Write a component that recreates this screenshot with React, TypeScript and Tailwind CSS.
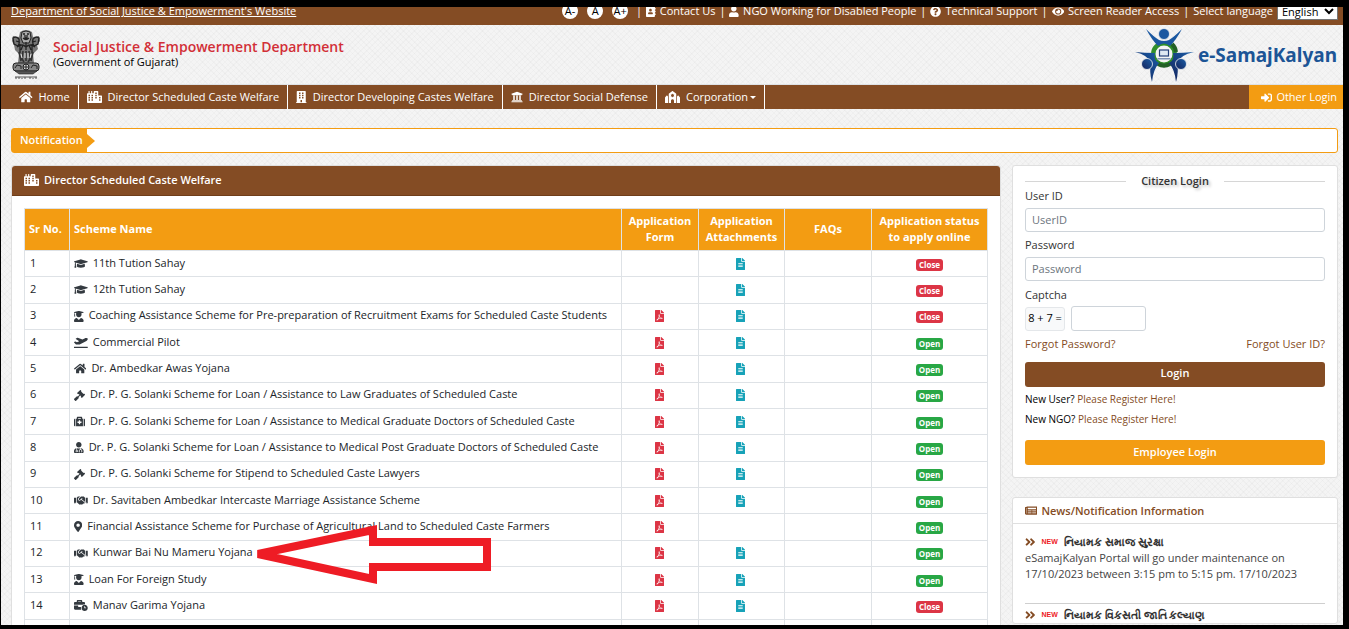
import React from "react";
import {
  FaAddressBook, FaUser, FaQuestionCircle, FaEye, FaHome, FaCity, FaBuilding, FaUniversity, FaSynagogue,
  FaSignInAlt, FaGraduationCap, FaUserGraduate, FaPlaneDeparture, FaGavel, FaMedkit, FaUserMd, FaHandshake,
  FaMapMarkerAlt, FaBusinessTime, FaFilePdf, FaFileAlt, FaNewspaper, FaAngleDoubleRight, FaBook,
} from "react-icons/fa";
import type { IconType } from "react-icons";

type Scheme = { name: string; icon: IconType; form: boolean; attachment: boolean; open: boolean };

const schemes: Scheme[] = [
  { name: "11th Tution Sahay", icon: FaGraduationCap, form: false, attachment: true, open: false },
  { name: "12th Tution Sahay", icon: FaGraduationCap, form: false, attachment: true, open: false },
  { name: "Coaching Assistance Scheme for Pre-preparation of Recruitment Exams for Scheduled Caste Students", icon: FaUserGraduate, form: true, attachment: true, open: false },
  { name: "Commercial Pilot", icon: FaPlaneDeparture, form: true, attachment: true, open: true },
  { name: "Dr. Ambedkar Awas Yojana", icon: FaHome, form: true, attachment: true, open: true },
  { name: "Dr. P. G. Solanki Scheme for Loan / Assistance to Law Graduates of Scheduled Caste", icon: FaGavel, form: true, attachment: true, open: true },
  { name: "Dr. P. G. Solanki Scheme for Loan / Assistance to Medical Graduate Doctors of Scheduled Caste", icon: FaMedkit, form: true, attachment: true, open: true },
  { name: "Dr. P. G. Solanki Scheme for Loan / Assistance to Medical Post Graduate Doctors of Scheduled Caste", icon: FaUserMd, form: true, attachment: true, open: true },
  { name: "Dr. P. G. Solanki Scheme for Stipend to Scheduled Caste Lawyers", icon: FaGavel, form: true, attachment: true, open: true },
  { name: "Dr. Savitaben Ambedkar Intercaste Marriage Assistance Scheme", icon: FaHandshake, form: true, attachment: true, open: true },
  { name: "Financial Assistance Scheme for Purchase of Agricultural Land to Scheduled Caste Farmers", icon: FaMapMarkerAlt, form: true, attachment: false, open: true },
  { name: "Kunwar Bai Nu Mameru Yojana", icon: FaHandshake, form: true, attachment: true, open: true },
  { name: "Loan For Foreign Study", icon: FaUserGraduate, form: true, attachment: true, open: true },
  { name: "Manav Garima Yojana", icon: FaBusinessTime, form: true, attachment: true, open: false },
  { name: "", icon: FaBook, form: false, attachment: false, open: false },
];

const navItems: { label: string; icon: IconType; caret?: boolean }[] = [
  { label: "Home", icon: FaHome },
  { label: "Director Scheduled Caste Welfare", icon: FaCity },
  { label: "Director Developing Castes Welfare", icon: FaBuilding },
  { label: "Director Social Defense", icon: FaUniversity },
  { label: "Corporation", icon: FaSynagogue, caret: true },
];

const topLinks: { label: string; icon: IconType }[] = [
  { label: "Contact Us", icon: FaAddressBook },
  { label: "NGO Working for Disabled People", icon: FaUser },
  { label: "Technical Support", icon: FaQuestionCircle },
  { label: "Screen Reader Access", icon: FaEye },
];

function Emblem() {
  return (
    <svg viewBox="0 0 30 50" className="h-[50px] w-[30px] shrink-0" aria-label="National emblem">
      <path d="M9 2Q15-2 21 2L22 7L28 6L29 11L26 15L27 19L24 22L22 24L23 33H7L8 24L4 20L3 15L1 11L2 6L8 7Z" fill="#777" />
      <path d="M11 2Q15 0 19 2L20 8L18 13H12L10 8Z" fill="#aaa" stroke="#222" strokeWidth="1" />
      <path d="M12 4h2m2 0h2M12 8q3 3 6 0M14 5v3h2V5M2 8q3-2 6 1q1 4-1 7l-4-2zM28 8q-3-2-6 1q-1 4 1 7l4-2zM5 11l3 1m17-1l-3 1M6 17q5-4 9 0q4-4 9 0M9 14v9m12-9v9M15 12v8M12 15l-2 5m8-5l2 5" fill="none" stroke="#222" strokeWidth="1.3" />
      <path d="M8 22l2 9M12 21l-1 8 2 3M15 21v10M18 21l1 8-2 3M22 22l-2 9" fill="none" stroke="#333" strokeWidth="1.6" />
      <path d="M10 24l1 4m3-5v5m3-5v5m3-4l-1 4" stroke="#eee" strokeWidth="1" />
      <rect x="2" y="33" width="26" height="8" rx="3" fill="#888" stroke="#222" />
      <circle cx="15" cy="37" r="3" fill="#ddd" stroke="#222" />
      <path d="M12 37h6M15 34v6M4 38l2-3 4 1v3M20 38l2-3 4 1v3" fill="none" stroke="#222" />
      <path d="M4 41h22l-4 3H8z" fill="#555" stroke="#222" strokeWidth=".6" />
      <path d="M4 47h22" stroke="#555" />
      <path d="M5 49v-2m3 2v-2m3 2v-1m3 1v-2m5 2v-2m3 2v-1m3 1v-2" stroke="#555" />
    </svg>
  );
}

function SamajLogo() {
  return (
    <svg viewBox="0 0 60 54" className="h-[54px] w-[60px] shrink-0" aria-hidden="true">
      <defs>
        <linearGradient id="figure" x1="0" y1="1" x2="1" y2="0">
          <stop offset="0" stopColor="#14225a" />
          <stop offset="1" stopColor="#1a5ea8" />
        </linearGradient>
      </defs>
      <circle cx="30" cy="26" r="10.5" fill="none" stroke="#2f8f2a" strokeWidth="5" />
      <path d="M38 16A13 13 0 0 1 42 24M24 36A12 12 0 0 0 36 36" fill="none" stroke="#236026" strokeWidth="4" />
      <g fill="#1a57a0">
        <path d="M12 1Q20 9 25 12Q30 14 35 12Q40 9 48 1Q42 12 36 18Q30 13 24 18Q18 12 12 1Z" />
        <circle cx="30" cy="6" r="5.5" stroke="#f2f2f2" strokeWidth=".8" />
      </g>
      <g fill="url(#figure)">
        <path d="M1 24Q11 25 21 25Q19 32 25 35Q19 42 18 54Q15 44 17 35Q14 27 1 24Z" />
        <circle cx="13" cy="36" r="5.5" stroke="#f2f2f2" strokeWidth=".8" />
        <path d="M60 24Q49 25 39 25Q41 32 35 35Q41 42 42 54Q45 44 43 35Q46 27 60 24Z" />
        <circle cx="47" cy="36" r="5.500" stroke="#f2f2f2" strokeWidth=".8" />
      </g>
      <circle cx="30" cy="26" r="8.5" fill="#f4f4f4" />
      <rect x="25.500" y="22" width="9" height="6" fill="#dfe8f2" stroke="#243f78" strokeWidth="1.200" />
      <path d="M24 30h12l1.500 1.500h-15z" fill="#7e93b5" />
    </svg>
  );
}

function NewBadge() {
  return <span className="font-['Liberation_Sans',sans-serif] text-[7px] font-bold text-[#ee1c25]">NEW</span>;
}

function Field({ id, label, placeholder, type }: { id: string; label: string; placeholder: string; type: string }) {
  return (
    <div className="mb-1.5">
      <label htmlFor={id} className="mb-[5px] block leading-[14px] font-medium text-[#333]">{label}</label>
      <input id={id} type={type} placeholder={placeholder} className="block h-6 w-full rounded-[3px] border border-[#ced4da] bg-white px-1.5 pb-0.5 placeholder:text-[#6c757d]" />
    </div>
  );
}

export default function App() {
  return (
    <div className="relative h-screen overflow-hidden border-t-[7px] border-r-[6px] border-b-4 border-l border-black bg-[#f4f4f4] bg-[repeating-linear-gradient(45deg,#00000005_0_1px,transparent_1px_4px),repeating-linear-gradient(-45deg,#00000005_0_1px,transparent_1px_4px)] font-['Open_Sans','Noto_Sans',sans-serif] text-[11px] leading-4 text-[#212529]">
      <div className="-mt-2.5 flex h-7 items-center justify-between bg-[#844c24] pr-[5px] pl-2.5 text-white">
        <a href="#department" className="underline">Department of Social Justice &amp; Empowerment's Website</a>
        <div className="flex items-center gap-1">
          <div className="mr-1 flex gap-[9px] text-black">
            {["A-", "A", "A+"].map((t) => (
              <button key={t} className="h-4 w-4 rounded-full bg-white leading-4">{t}</button>
            ))}
          </div>
          {topLinks.map(({ label, icon: Icon }) => (
            <React.Fragment key={label}>
              <span>|</span>
              <a href="#top" className="flex items-center gap-1"><Icon size="auto" className="h-[11px] w-auto" />{label}</a>
            </React.Fragment>
          ))}
          <span>|</span>
          <label htmlFor="language">Select language</label>
          <select id="language" className="h-[18px] w-[61px] border border-[#767676] bg-white text-[11px] leading-4 text-black">
            <option>English</option>
          </select>
        </div>
      </div>

      <header className="flex h-[60px] items-center justify-between border-b border-[#dee2e6] pr-1.5 pl-2.5">
        <div className="flex items-center gap-3">
          <Emblem />
          <div className="pb-0.5">
            <h1 className="text-sm leading-4 font-semibold text-[#d22f37]">Social Justice &amp; Empowerment Department</h1>
            <p className="leading-[14px] text-black">(Government of Gujarat)</p>
          </div>
        </div>
        <a href="#home" className="flex items-center gap-1">
          <SamajLogo />
          <span className="font-['Noto_Sans'] text-[19px] font-bold text-[#1c5596]">e-SamajKalyan</span>
        </a>
      </header>

      <nav className="flex h-6 items-stretch bg-[#844c24] pl-2.5 font-medium text-white">
        {navItems.map(({ label, icon: Icon, caret }) => (
          <a key={label} href="#nav" className="flex items-center gap-1.5 border-r border-white px-2">
            <Icon size="auto" className="h-3 w-auto" />
            {label}
            {caret && <span className="-ml-1 border-x-[3px] border-t-[3px] border-x-transparent border-t-white" />}
          </a>
        ))}
        <a href="#login" className="ml-auto flex items-center gap-1 bg-[#f39c12] pr-1.5 pl-3"><FaSignInAlt size="auto" className="h-[11px] w-auto" />Other Login</a>
      </nav>

      <div className="mt-[19px] mr-[5px] ml-2.5 flex h-[25px] items-center rounded-[3px] border border-[#f39c12] bg-white">
        <span className="flex h-full w-[75px] items-center bg-[#f39c12] pb-0.5 pl-2 font-semibold text-white">Notification</span>
        <span className="border-y-[7px] border-l-8 border-y-transparent border-l-[#f39c12]" />
      </div>

      <div className="mt-3 mr-[5px] ml-2.5 grid grid-cols-[minmax(0,1fr)_326px] items-start gap-[11px]">
        <main className="rounded-[3px] border border-[#dfdfdf] bg-white">
          <h2 className="flex h-[30px] items-center gap-[5px] rounded-t-[3px] border-b border-[#6f3d19] bg-[#844c24] px-3 pb-px font-semibold text-white"><FaCity size="auto" className="h-3 w-auto" />Director Scheduled Caste Welfare</h2>
          <div className="p-3">
            <table className="h-[438px] w-full table-fixed border-collapse">
              <colgroup>
                <col className="w-[45px]" />
                <col />
                <col className="w-[77px]" />
                <col className="w-[86px]" />
                <col className="w-[87px]" />
                <col className="w-[116px]" />
              </colgroup>
              <thead>
                <tr className="h-[42px] bg-[#f39c12] text-white">
                  {["Sr No.", "Scheme Name", "Application Form", "Application Attachments", "FAQs", "Application status to apply online"].map((h, i) => (
                    <th key={h} className={`border border-[#dee2e6] px-1 pb-0.5 font-bold ${i < 2 ? "text-left" : "text-center"}`}>{h}</th>
                  ))}
                </tr>
              </thead>
              <tbody>
                {schemes.map(({ name, icon: Icon, form, attachment, open }, i) => (
                  <tr key={i} className="h-5">
                    <td className="border border-[#dee2e6] px-[5px] pb-0.5">{name && i + 1}</td>
                    <td className="border border-[#dee2e6] px-1 pb-0.5">
                      <span className="flex items-center gap-[5px]"><Icon size="auto" className="mt-0.5 h-[11px] w-auto text-[#343a40]" />{name}</span>
                    </td>
                    <td className="border border-[#dee2e6] pr-0.5">{form && <a href="#form" aria-label="Application form"><FaFilePdf size="auto" className="mx-auto h-3 w-auto text-[#dc3545]" /></a>}</td>
                    <td className="border border-[#dee2e6] pr-0.5">{attachment && <a href="#attachments" aria-label="Attachments"><FaFileAlt size="auto" className="mx-auto h-3 w-auto text-[#17a2b8]" /></a>}</td>
                    <td className="border border-[#dee2e6]" />
                    <td className="border border-[#dee2e6] text-center">
                      {name && <span className={`mx-auto mt-0.5 block h-3 w-[27px] rounded-[3px] text-[8px] leading-[11px] font-bold text-white ${open ? "bg-[#28a745]" : "bg-[#dc3545]"}`}>{open ? "Open" : "Close"}</span>}
                    </td>
                  </tr>
                ))}
              </tbody>
            </table>
          </div>
        </main>

        <aside className="flex flex-col gap-[19px]">
          <form className="rounded-[3px] border border-[#dfdfdf] bg-white px-3 pt-[7px] pb-3" onSubmit={(e) => e.preventDefault()}>
            <h3 className="flex items-center font-semibold text-[#333]">
              <span className="h-px flex-1 bg-[#d6d6d6]" />
              <span className="px-[15px] [text-shadow:2px_2px_3px_#bbb]">Citizen Login</span>
              <span className="h-px flex-1 bg-[#d6d6d6]" />
            </h3>
            <Field id="user" label="User ID" placeholder="UserID" type="text" />
            <Field id="password" label="Password" placeholder="Password" type="password" />
            <label htmlFor="captcha" className="mb-1 block leading-[15px] font-medium text-[#333]">Captcha</label>
            <div className="flex items-center gap-1.5">
              <span className="flex h-6 w-10 items-center justify-center rounded-[3px] border border-[#e4e7ea] bg-[#f8f9fa] pb-0.5 text-black">8 + 7 =</span>
              <input id="captcha" className="h-[25px] w-[75px] rounded-[3px] border border-[#ced4da] px-1.5" />
            </div>
            <div className="mt-[5px] flex justify-between font-medium text-[#844c24]">
              <a href="#forgot-password">Forgot Password?</a>
              <a href="#forgot-user">Forgot User ID?</a>
            </div>
            <button className="mt-2.5 block h-[25px] w-full rounded-[3px] bg-[#844c24] pb-[3px] font-semibold text-white">Login</button>
            <p className="mt-0.5 text-[10px] leading-5 font-medium text-black">New User? <a href="#register" className="text-[#844c24]">Please Register Here!</a></p>
            <p className="text-[10px] leading-5 font-medium text-black">New NGO? <a href="#register-ngo" className="text-[#844c24]">Please Register Here!</a></p>
            <button type="button" className="mt-[11px] block h-[25px] w-full rounded-[3px] bg-[#f39c12] pb-px font-semibold text-white">Employee Login</button>
          </form>

          <section className="rounded-[3px] border border-[#dfdfdf] bg-white">
            <h3 className="flex h-[26px] items-center gap-1 border-b border-[#dfdfdf] px-3 font-semibold text-[#844c24]"><FaNewspaper size="auto" className="h-[11px] w-auto" />News/Notification Information</h3>
            <div className="px-3 pt-2.5">
              <article className="mb-[3px] h-[70px] border-b border-[#cfcfcf] text-[#444]">
                <h4 className="flex items-center gap-1.5 font-bold text-[#333]"><FaAngleDoubleRight size="auto" className="h-3 w-auto text-[#844c24]" /><NewBadge />નિયામક સમાજ સુરક્ષા</h4>
                <p>eSamajKalyan Portal will go under maintenance on 17/10/2023 between 3:15 pm to 5:15 pm. 17/10/2023</p>
              </article>
              <article>
                <h4 className="flex items-center gap-1.5 font-bold text-[#333]"><FaAngleDoubleRight size="auto" className="h-3 w-auto text-[#844c24]" /><NewBadge />નિયામક વિકસતી જાતિ કલ્યાણ</h4>
              </article>
            </div>
          </section>
        </aside>
      </div>

      <svg viewBox="0 0 240 60" className="pointer-events-none absolute top-[518px] left-[254px] h-[60px] w-[240px]" aria-hidden="true">
        <path d="M3 29L118 5V17H232V42H118V54Z" fill="none" stroke="#ee1c25" strokeWidth="8" strokeMiterlimit="2" />
      </svg>
    </div>
  );
}
